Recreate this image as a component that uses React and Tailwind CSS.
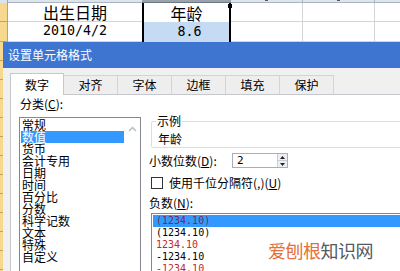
import React from 'react';

const categories = ['常规', '数值', '货币', '会计专用', '日期', '时间', '百分比', '分数', '科学记数', '文本', '特殊', '自定义'];

const negatives = [
  { text: '(1234.10)', color: 'text-[#7a2a55]', selected: true },
  { text: '(1234.10)', color: 'text-black' },
  { text: '1234.10', color: 'text-[#c0282d]' },
  { text: '-1234.10', color: 'text-black' },
  { text: '-1234.10', color: 'text-[#c0282d]' },
];

const tabs = ['数字', '对齐', '字体', '边框', '填充', '保护'];

const Sheet = () => (
  <div className="h-[42px] shrink-0 grid grid-cols-[8px_134px_89px_72px_72px_1fr] grid-rows-[3px_19px_20px]">
    {/* column header strip */}
    <div className="bg-[#dbe2ea] border-r border-[#c9a24b]" />
    <div className="bg-[#dfe4ea] border-b border-[#a9b4c2]" />
    <div className="bg-[#9aa3ad] border-b border-[#6d7781]" />
    <div className="bg-[#dfe4ea] border-b border-r border-[#a9b4c2] flex justify-center"><div className="w-[3px] h-[1px] bg-[#555]" /></div>
    <div className="bg-[#dfe4ea] border-b border-r border-[#a9b4c2] flex justify-center"><div className="w-[3px] h-[1px] bg-[#555]" /></div>
    <div className="bg-[#dfe4ea] border-b border-[#a9b4c2]" />

    {/* row 1 */}
    <div className="bg-[#f6d98f] border-r border-b border-[#c9a24b]" />
    <div className="flex items-center justify-center text-[16px] leading-none border-b border-[#d4d4d4]">出生日期</div>
    <div className="relative flex items-center justify-center text-[16px] leading-none border-x-2 border-black bg-white">
      年龄
      <div className="absolute -right-[3px] top-[1px] w-[4px] h-[4px] bg-black" />
    </div>
    <div className="border-r border-b border-[#d4d4d4]" />
    <div className="border-r border-b border-[#d4d4d4]" />
    <div className="border-b border-[#d4d4d4]" />

    {/* row 2 */}
    <div className="bg-[#f6d98f] border-r border-b border-[#c9a24b]" />
    <div className="flex items-center justify-center pb-px text-[13.3px] leading-none font-['DejaVu_Sans_Mono',monospace] border-b border-[#d4d4d4]">2010/4/2</div>
    <div className="flex items-center justify-center pb-px pl-[6px] text-[13.3px] leading-none font-['DejaVu_Sans_Mono',monospace] border-x-2 border-black bg-[#c5dbf3]">8.6</div>
    <div className="border-r border-b border-[#d4d4d4]" />
    <div className="border-r border-b border-[#d4d4d4]" />
    <div className="border-b border-[#d4d4d4]" />
  </div>
);

const CategoryList = () => (
  <div className="w-[131px] pl-[8px] pt-[3px] flex flex-col">
    <div className="pl-px h-[12px] leading-[12px] text-[12px]">
      分类(<span className="underline">C</span>):
    </div>
    <div className="mt-[7px] w-[122px] flex-1 flex border border-b-0 border-[#828790]">
      <div className="w-[104px] pl-px pt-px">
        {categories.map((c) => (
          <div
            key={c}
            className={
              'h-[12px] leading-[12px] text-[12px] pl-px ' +
              (c === '数值' ? 'bg-[#3399ff] text-white' : 'text-black')
            }
          >
            {c}
          </div>
        ))}
      </div>
      <div className="flex-1 flex justify-center pt-[8px]">
        <svg width="9" height="6" viewBox="0 0 9 6">
          <path d="M1 5 L4.5 1.5 L8 5" fill="none" stroke="#b9bcc1" strokeWidth="1.5" />
        </svg>
      </div>
    </div>
  </div>
);

const Spinner = () => (
  <div className="w-[10px] flex flex-col border-l border-[#c9ccd1] bg-[#eceff3]">
    <div className="flex-1 flex items-center justify-center border-b border-[#c9ccd1]">
      <svg width="5" height="3" viewBox="0 0 5 3"><path d="M0 3 L2.5 0 L5 3 Z" fill="#222" /></svg>
    </div>
    <div className="flex-1 flex items-center justify-center">
      <svg width="5" height="3" viewBox="0 0 5 3"><path d="M0 0 L2.5 3 L5 0 Z" fill="#222" /></svg>
    </div>
  </div>
);

const RightSide = () => (
  <div className="flex-1 ml-[7px] flex flex-col">
    <fieldset className="mt-[20px] ml-[2px] -mr-[12px] border border-[#d5dfe5] rounded-[2px] pl-[4px] pb-[2px]">
      <legend className="px-px text-[12px] leading-[12px]">示例</legend>
      <div className="mt-[6px] pl-[2px] h-[12px] text-[12px] leading-[12px]">年龄</div>
    </fieldset>

    <div className="mt-[5px] h-[15px] flex items-center">
      <div className="w-[83px] text-[12px] leading-[12px]">
        小数位数(<span className="underline">D</span>):
      </div>
      <div className="w-[56px] h-[15px] flex border border-[#abadb3] bg-white">
        <div className="flex-1 pl-[4px] text-[11px] leading-[13px] font-['DejaVu_Sans_Mono',monospace]">2</div>
        <Spinner />
      </div>
    </div>

    <div className="mt-[9px] h-[12px] flex items-center">
      <div className="ml-[2px] w-[12px] h-[12px] border border-[#333] bg-white" />
      <div className="ml-[6px] text-[12px] leading-[12px]">
        使用千位分隔符(,)(<span className="underline">U</span>)
      </div>
    </div>

    <div className="mt-[8px] h-[12px] text-[12px] leading-[12px]">
      负数(<span className="underline">N</span>):
    </div>

    <div className="mt-[4px] ml-[2px] -mr-[12px] flex-1 border border-b-0 border-[#828790] pl-px pt-px">
      {negatives.map((n, i) => (
        <div
          key={i}
          className={
            'h-[12px] leading-[12px] pl-[3px] text-[10px] font-[\'DejaVu_Sans_Mono\',monospace] ' +
            n.color +
            (n.selected ? ' bg-[#3399ff]' : '')
          }
        >
          {n.text}
        </div>
      ))}
    </div>
  </div>
);

const Dialog = () => (
  <div className="flex-1 flex flex-col">
    <div className="h-[26px] shrink-0 bg-[#3d75d1] flex items-center pl-[5px] text-white text-[12px]">
      设置单元格格式
    </div>
    <div className="flex-1 flex flex-col bg-[#f0f0f0] pl-[7px] pt-[6px]">
      <div className="h-[21px] flex items-end border-b border-[#c5c8cc]">
        {tabs.map((t, i) =>
          i === 0 ? (
            <div
              key={t}
              className="w-[54px] h-[22px] -mb-px bg-white border border-b-0 border-[#c5c8cc] flex items-center justify-center text-[12px]"
            >
              {t}
            </div>
          ) : (
            <div
              key={t}
              className="w-[54px] h-[19px] bg-[#eeeeee] border-t border-r border-[#d2d4d7] flex items-center justify-center text-[12px]"
            >
              {t}
            </div>
          )
        )}
      </div>
      <div className="flex-1 flex bg-white border-l border-[#c5c8cc]">
        <CategoryList />
        <RightSide />
      </div>
    </div>
  </div>
);

export default function App() {
  return (
    <div className="relative w-[400px] h-[271px] overflow-hidden bg-white flex flex-col text-black font-['Noto_Sans_CJK_SC','Liberation_Sans',sans-serif]">
      <Sheet />
      <div className="flex-1 flex">
        <div className="w-[3px] shrink-0 flex flex-col bg-[#f6d98f]">
          {Array.from({ length: 12 }).map((_, i) => (
            <div key={i} className="h-[19px] shrink-0 border-b border-[#c9a24b]" />
          ))}
        </div>
        <Dialog />
      </div>

      {/* watermark */}
      <div className="absolute left-[268px] top-[239px] text-[18px] leading-[22px] tracking-[-0.5px]">
        <span className="text-[#e4703c]">爱刨根</span>
        <span className="text-[#55595e]">知识网</span>
      </div>
    </div>
  );
}
